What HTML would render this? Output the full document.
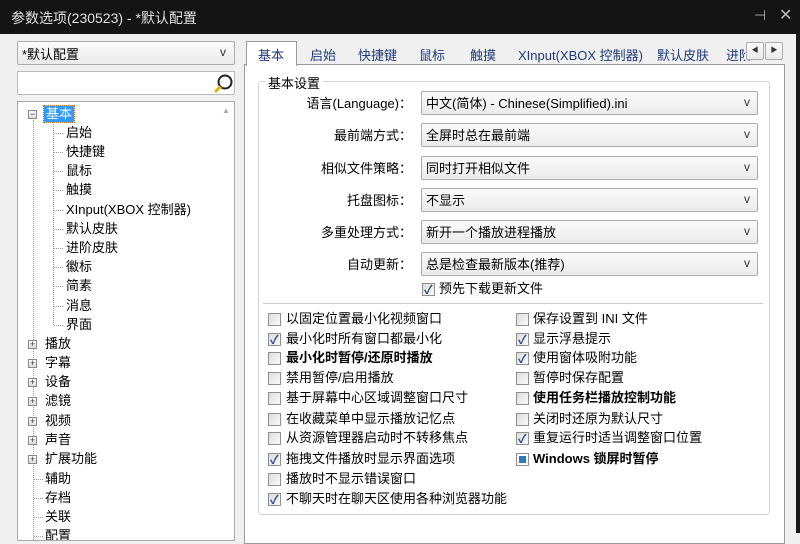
<!DOCTYPE html>
<html><head><meta charset="utf-8"><style>
*{margin:0;padding:0;box-sizing:border-box}
body{width:800px;height:533px;overflow:hidden;background:#f0f0f0;font-family:"Liberation Sans","Noto Sans CJK SC",sans-serif;font-size:13px;color:#000;position:relative}
.a{position:absolute;white-space:nowrap}
.title{left:0;top:0;width:800px;height:34px;background:#141414;color:#e0e0e0;font-size:14px}
.rb{left:796px;top:34px;width:4px;height:499px;background:#1a1a1a}
.combo{background:linear-gradient(#fafafa,#ebebeb);border:1px solid #acacac;border-radius:2px}
.v{font-size:12px;color:#333}
.tree{left:17px;top:101px;width:218px;height:440px;background:#fff;border:1px solid #aaa;overflow:hidden}
.ti{position:absolute;white-space:nowrap;font-size:13px;line-height:16px}
.pl{position:absolute;width:9px;height:9px;border:1px solid #888;background:linear-gradient(#fff,#ddd);font-size:9px;line-height:7px;text-align:center;color:#333}
.dv{position:absolute;border-left:1px dotted #999}
.dh{position:absolute;border-top:1px dotted #999;width:9px}
.pane{left:244px;top:64px;width:541px;height:480px;background:#fff;border:1px solid #999}
.tab{top:45px;color:#1e3a7a;font-size:13px}
.cb{position:absolute;width:13px;height:13px;border:1px solid #8e8f8f;background:linear-gradient(135deg,#dcdcdc,#fafafa)}
.cb.c::after{content:"✓";position:absolute;left:1px;top:-3px;font-size:12px;color:#2a4a8a;font-weight:bold}
.lb{position:absolute;white-space:nowrap;font-size:13px;line-height:16px}
.lbl{position:absolute;right:388px;white-space:nowrap}
.dd{position:absolute;left:421px;width:337px;height:24px}
.dd span{position:absolute;left:4px;top:1px}
.dd i{position:absolute;right:7px;top:3px;font-style:normal;font-size:12px;color:#333}
</style></head><body>
<div class="a title"><span style="position:absolute;left:11px;top:8px">参数选项(230523) - *默认配置</span>
<span style="position:absolute;left:754px;top:7px;color:#aaa;font-size:14px">⊣</span><span style="position:absolute;left:779px;top:5px;color:#bbb;font-size:16px">✕</span></div>
<div class="a rb"></div>
<div class="a combo" style="left:17px;top:41px;width:218px;height:24px"><span style="position:absolute;left:4px;top:2px">*默认配置</span><span class="v" style="position:absolute;right:8px;top:3px">v</span></div>
<div class="a" style="left:17px;top:71px;width:218px;height:24px;background:#fff;border:1px solid #bbb">
<svg style="position:absolute;left:194px;top:1px" width="22" height="22"><circle cx="13" cy="9" r="6.5" fill="none" stroke="#222" stroke-width="2"/><line x1="8.5" y1="13.5" x2="3" y2="19" stroke="#e8b400" stroke-width="3"/></svg></div>
<div class="a tree">
<div style="position:absolute;left:204px;top:4px;font-size:8px;color:#aaa">▲</div>
<div class="dv" style="left:15px;top:18px;height:440px"></div>
<div class="dv" style="left:35px;top:18px;height:205px"></div>
<div class="pl" style="left:10px;top:8px;line-height:6px">−</div>
<div class="ti" style="left:26px;top:4px;background:#3399ff;color:#fff;padding:0 2px;outline:1px dotted #c60">基本</div>
<div class="dh" style="left:36px;top:31px"></div><div class="ti" style="left:48px;top:23px">启始</div>
<div class="dh" style="left:36px;top:50px"></div><div class="ti" style="left:48px;top:42px">快捷键</div>
<div class="dh" style="left:36px;top:69px"></div><div class="ti" style="left:48px;top:61px">鼠标</div>
<div class="dh" style="left:36px;top:88px"></div><div class="ti" style="left:48px;top:80px">触摸</div>
<div class="dh" style="left:36px;top:108px"></div><div class="ti" style="left:48px;top:100px">XInput(XBOX 控制器)</div>
<div class="dh" style="left:36px;top:127px"></div><div class="ti" style="left:48px;top:119px">默认皮肤</div>
<div class="dh" style="left:36px;top:146px"></div><div class="ti" style="left:48px;top:138px">进阶皮肤</div>
<div class="dh" style="left:36px;top:165px"></div><div class="ti" style="left:48px;top:157px">徽标</div>
<div class="dh" style="left:36px;top:184px"></div><div class="ti" style="left:48px;top:176px">简素</div>
<div class="dh" style="left:36px;top:204px"></div><div class="ti" style="left:48px;top:196px">消息</div>
<div class="dh" style="left:36px;top:223px"></div><div class="ti" style="left:48px;top:215px">界面</div>
<div class="pl" style="left:10px;top:238px">+</div><div class="ti" style="left:27px;top:234px">播放</div>
<div class="pl" style="left:10px;top:257px">+</div><div class="ti" style="left:27px;top:253px">字幕</div>
<div class="pl" style="left:10px;top:276px">+</div><div class="ti" style="left:27px;top:272px">设备</div>
<div class="pl" style="left:10px;top:295px">+</div><div class="ti" style="left:27px;top:291px">滤镜</div>
<div class="pl" style="left:10px;top:315px">+</div><div class="ti" style="left:27px;top:311px">视频</div>
<div class="pl" style="left:10px;top:334px">+</div><div class="ti" style="left:27px;top:330px">声音</div>
<div class="pl" style="left:10px;top:353px">+</div><div class="ti" style="left:27px;top:349px">扩展功能</div>
<div class="dh" style="left:16px;top:377px"></div><div class="ti" style="left:27px;top:369px">辅助</div>
<div class="dh" style="left:16px;top:396px"></div><div class="ti" style="left:27px;top:388px">存档</div>
<div class="dh" style="left:16px;top:415px"></div><div class="ti" style="left:27px;top:407px">关联</div>
<div class="dh" style="left:16px;top:434px"></div><div class="ti" style="left:27px;top:426px">配置</div>
</div>
<div class="a pane"></div>
<div class="a" style="left:246px;top:41px;width:51px;height:25px;background:#fff;border:1px solid #999;border-bottom:none"></div>
<div class="a tab" style="left:258px;color:#1e3a7a">基本</div>
<div class="a tab" style="left:310px">启始</div>
<div class="a tab" style="left:358px">快捷键</div>
<div class="a tab" style="left:419px">鼠标</div>
<div class="a tab" style="left:470px">触摸</div>
<div class="a tab" style="left:518px">XInput(XBOX 控制器)</div>
<div class="a tab" style="left:657px">默认皮肤</div>
<div class="a tab" style="left:726px">进阶</div>
<div class="a" style="left:745px;top:41px;width:37px;height:19px;background:#f0f0f0"></div>
<div class="a combo" style="left:746px;top:42px;width:18px;height:18px;font-size:7px;text-align:center;line-height:16px;color:#333">◀</div>
<div class="a combo" style="left:765px;top:42px;width:18px;height:18px;font-size:7px;text-align:center;line-height:16px;color:#333">▶</div>
<div class="a" style="left:258px;top:81px;width:512px;height:434px;border:1px solid #d5d5d5;border-radius:3px"></div>
<div class="a" style="left:265px;top:73px;background:#fff;padding:0 3px">基本设置</div>
<div class="lbl" style="top:93px">语言(Language)：</div>
<div class="lbl" style="top:125px">最前端方式：</div>
<div class="lbl" style="top:158px">相似文件策略：</div>
<div class="lbl" style="top:190px">托盘图标：</div>
<div class="lbl" style="top:222px">多重处理方式：</div>
<div class="lbl" style="top:254px">自动更新：</div>
<div class="dd combo" style="top:91px"><span>中文(简体) - Chinese(Simplified).ini</span><i>v</i></div>
<div class="dd combo" style="top:123px"><span>全屏时总在最前端</span><i>v</i></div>
<div class="dd combo" style="top:156px"><span>同时打开相似文件</span><i>v</i></div>
<div class="dd combo" style="top:188px"><span>不显示</span><i>v</i></div>
<div class="dd combo" style="top:220px"><span>新开一个播放进程播放</span><i>v</i></div>
<div class="dd combo" style="top:252px"><span>总是检查最新版本(推荐)</span><i>v</i></div>
<div class="cb c" style="left:422px;top:283px"></div><div class="lb" style="left:439px;top:281px">预先下载更新文件</div>
<div class="a" style="left:263px;top:303px;width:500px;height:2px;border-top:1px solid #ccc;border-bottom:1px solid #fff"></div>
<div class="cb" style="left:268px;top:313px"></div><div class="lb" style="left:286px;top:311px">以固定位置最小化视频窗口</div>
<div class="cb c" style="left:268px;top:333px"></div><div class="lb" style="left:286px;top:331px">最小化时所有窗口都最小化</div>
<div class="cb" style="left:268px;top:352px"></div><div class="lb" style="left:286px;top:350px;font-weight:bold">最小化时暂停/还原时播放</div>
<div class="cb" style="left:268px;top:372px"></div><div class="lb" style="left:286px;top:370px">禁用暂停/启用播放</div>
<div class="cb" style="left:268px;top:392px"></div><div class="lb" style="left:286px;top:390px">基于屏幕中心区域调整窗口尺寸</div>
<div class="cb" style="left:268px;top:413px"></div><div class="lb" style="left:286px;top:411px">在收藏菜单中显示播放记忆点</div>
<div class="cb" style="left:268px;top:432px"></div><div class="lb" style="left:286px;top:430px">从资源管理器启动时不转移焦点</div>
<div class="cb c" style="left:268px;top:453px"></div><div class="lb" style="left:286px;top:451px">拖拽文件播放时显示界面选项</div>
<div class="cb" style="left:268px;top:473px"></div><div class="lb" style="left:286px;top:471px">播放时不显示错误窗口</div>
<div class="cb c" style="left:268px;top:493px"></div><div class="lb" style="left:286px;top:491px">不聊天时在聊天区使用各种浏览器功能</div>
<div class="cb" style="left:516px;top:313px"></div><div class="lb" style="left:533px;top:311px">保存设置到 INI 文件</div>
<div class="cb c" style="left:516px;top:333px"></div><div class="lb" style="left:533px;top:331px">显示浮悬提示</div>
<div class="cb c" style="left:516px;top:352px"></div><div class="lb" style="left:533px;top:350px">使用窗体吸附功能</div>
<div class="cb" style="left:516px;top:372px"></div><div class="lb" style="left:533px;top:370px">暂停时保存配置</div>
<div class="cb" style="left:516px;top:392px"></div><div class="lb" style="left:533px;top:390px;font-weight:bold">使用任务栏播放控制功能</div>
<div class="cb" style="left:516px;top:413px"></div><div class="lb" style="left:533px;top:411px">关闭时还原为默认尺寸</div>
<div class="cb c" style="left:516px;top:432px"></div><div class="lb" style="left:533px;top:430px">重复运行时适当调整窗口位置</div>
<div class="cb" style="left:516px;top:453px;background:#fff"><div style="position:absolute;left:2px;top:2px;width:7px;height:7px;background:#2a7ac0"></div></div><div class="lb" style="left:533px;top:451px;font-weight:bold">Windows 锁屏时暂停</div>
</body></html>
